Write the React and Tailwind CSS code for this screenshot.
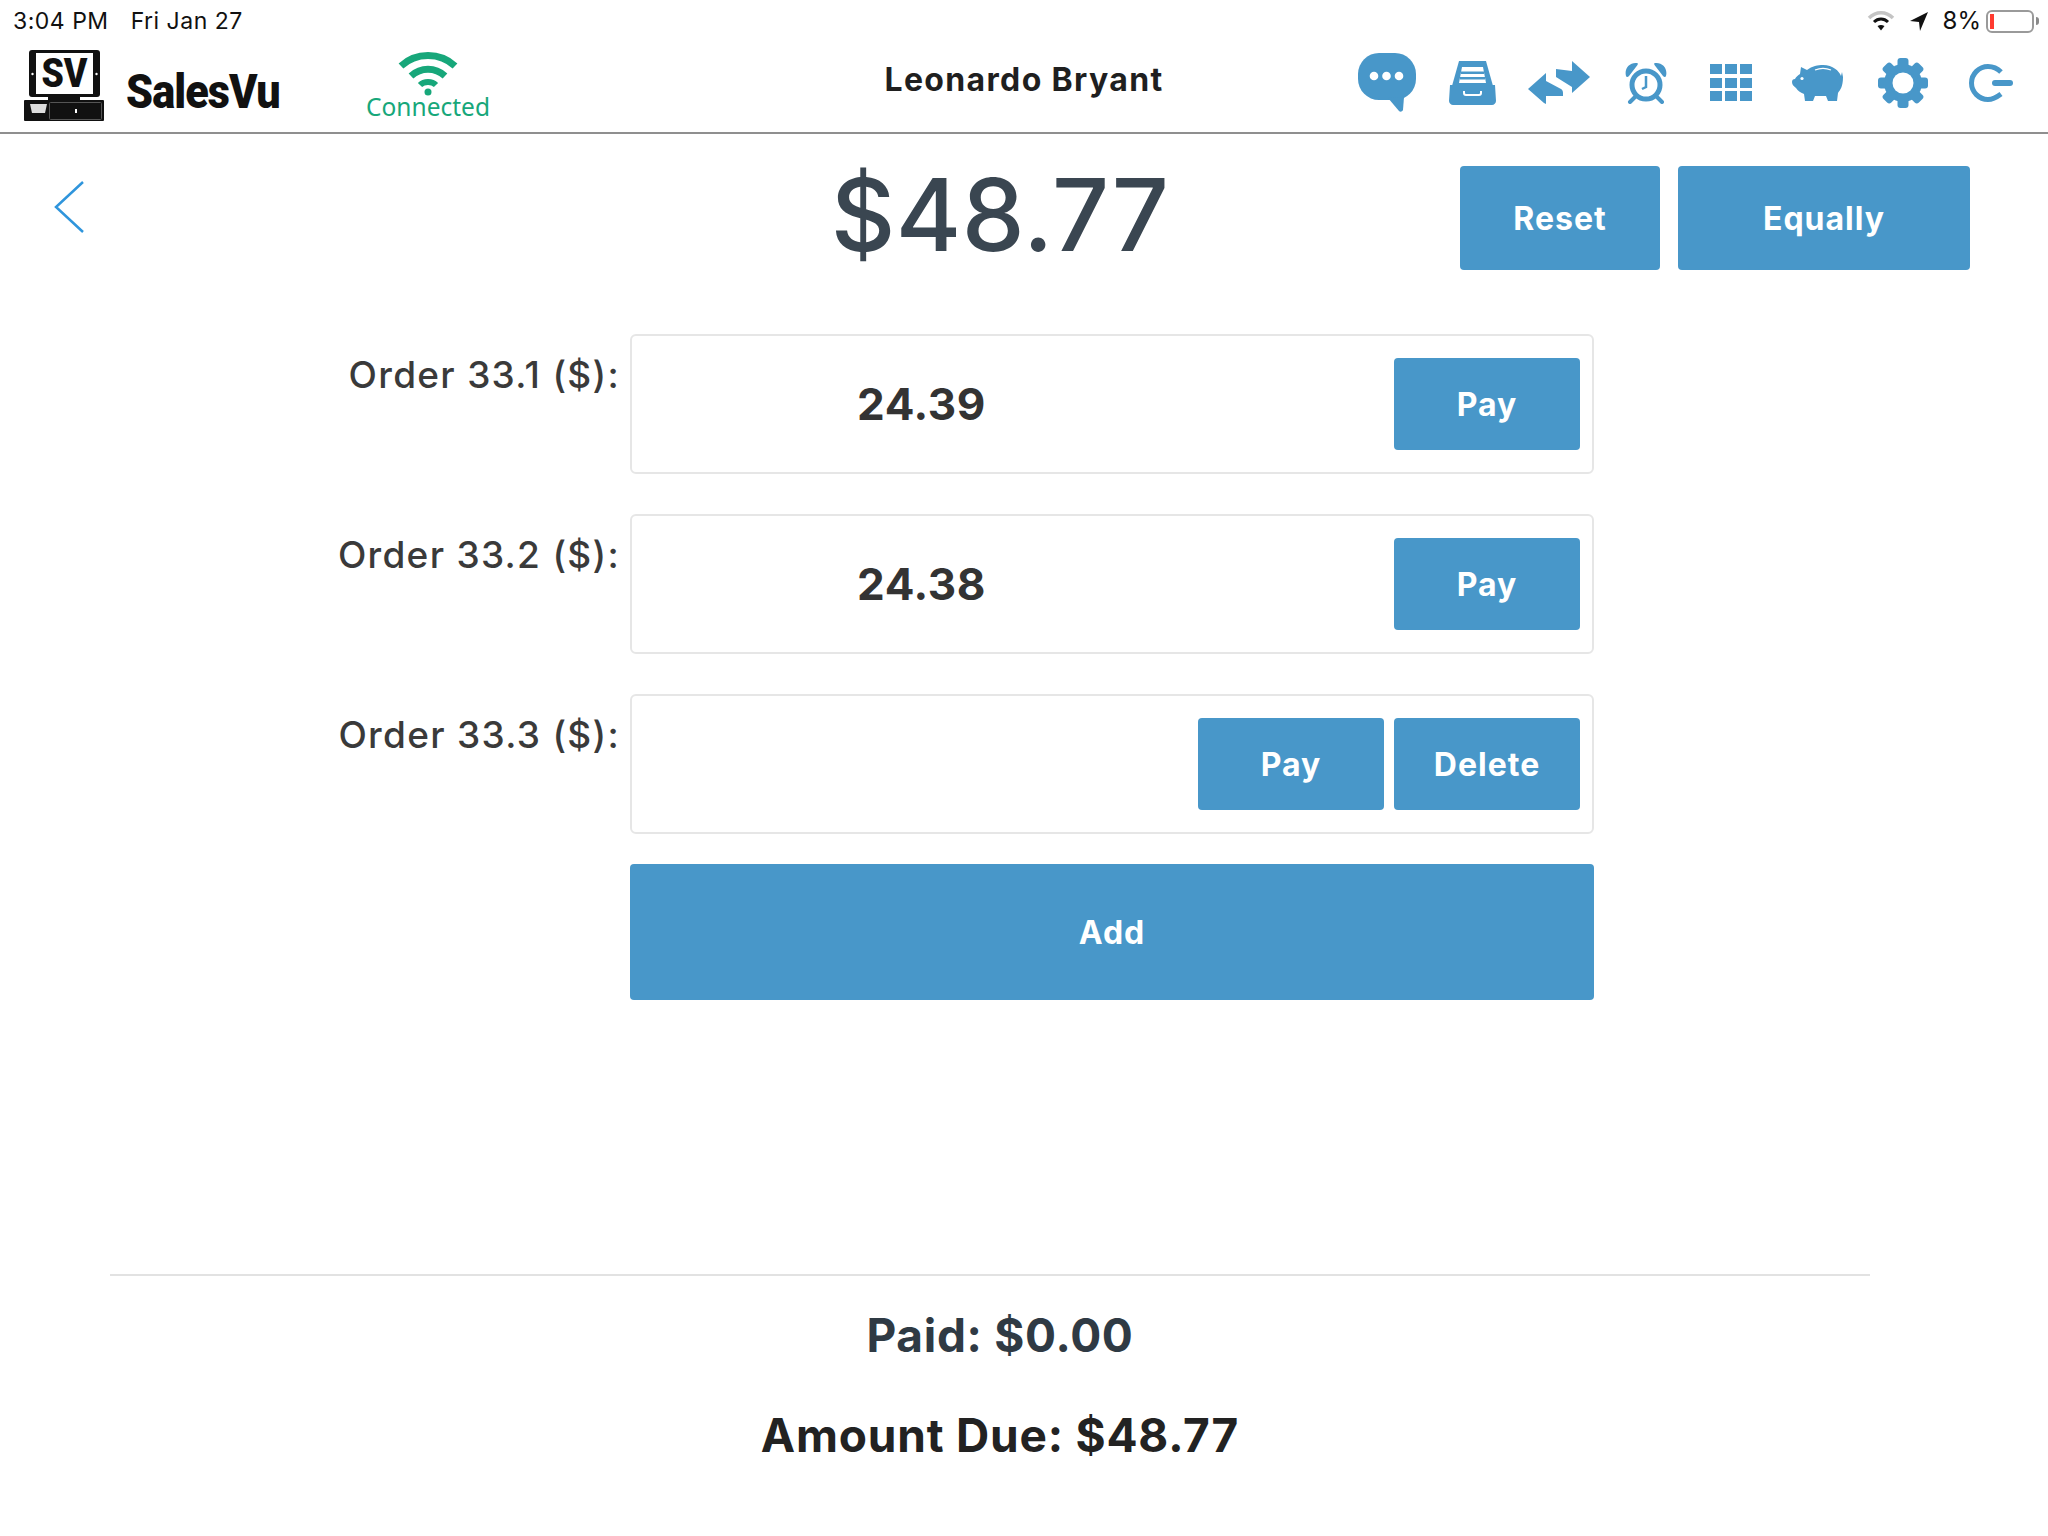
const rows = [
  { label: "Order 33.1 ($):", value: "24.39" },
  { label: "Order 33.2 ($):", value: "24.38" },
  { label: "Order 33.3 ($):", value: "", del: true },
];

const blue = "#4897c9";

function Logo() {
  return (
    <svg width="80" height="72" viewBox="0 0 80 72" className="shrink-0">
      <rect x="5" y="0" width="71" height="47" rx="3" fill="#111" />
      <rect x="12" y="3" width="57" height="41" fill="#fff" />
      <circle cx="8.5" cy="24" r="1.2" fill="#fff" />
      <circle cx="72.5" cy="24" r="1.2" fill="#fff" />
      <text x="40.5" y="37" textAnchor="middle" fontFamily="Roboto" fontWeight="900" fontSize="40" textLength="46" lengthAdjust="spacingAndGlyphs" fill="#111">SV</text>
      <rect x="24" y="47" width="32" height="3" fill="#111" />
      <rect x="0" y="50" width="80" height="21" rx="1" fill="#111" />
      <path d="M6 54H23L21 63H8Z" fill="#ddd" />
      <rect x="25.500" y="52.500" width="52" height="17" rx="1" fill="none" stroke="#555" strokeWidth="1" />
      <rect x="51" y="59" width="2" height="4" fill="#fff" />
    </svg>
  );
}

function WifiBig() {
  return (
    <svg width="60" height="45" viewBox="0 0 60 45" fill="none" stroke="#17a77a">
      <path d="M3 15C18 1 42 1 57 15" strokeWidth="7" />
      <path d="M13 25C23 16 37 16 47 25" strokeWidth="7" />
      <path d="M22 34C26 30 34 30 38 34" strokeWidth="6" />
      <circle cx="30" cy="41" r="3.500" fill="#17a77a" stroke="none" />
    </svg>
  );
}

function NavIcons() {
  return (
    <div className="flex items-center">
      <svg width="58" height="59" viewBox="0 0 58 59" className="mr-[33px]">
        <rect x="0" y="0" width="58" height="47" rx="21" fill={blue} />
        <path d="M30 45L46 44L45 57C44 59 42 59 41 58Z" fill={blue} />
        <circle cx="16" cy="23" r="4.300" fill="#fff" />
        <circle cx="28.500" cy="23" r="4.300" fill="#fff" />
        <circle cx="41" cy="23" r="4.300" fill="#fff" />
      </svg>
      <svg width="47" height="44" viewBox="0 0 47 44" className="mr-[32px]">
        <path d="M10 0H37L44 25H3Z" fill={blue} />
        <path d="M13 6H34L37 22H10Z" fill="#fff" />
        <rect x="12" y="10.500" width="23" height="2.500" fill={blue} />
        <rect x="11" y="16" width="25" height="2.500" fill={blue} />
        <path d="M1 24H46L47 40C47 42 45 44 43 44H4C2 44 0 42 0 40Z" fill={blue} />
        <path d="M15 30V32C15 33.500 16 34 17 34H30C31 34 32 33.500 32 32V30" fill="none" stroke="#fff" strokeWidth="2" />
      </svg>
      <svg width="62" height="43" viewBox="0 0 62 43" className="mr-[35px]">
        <path d="M0 28L18 12V20L33 28C34.500 29 35 30 35 32V35H18V43L16 42Z" fill={blue} />
        <path d="M62 16L44 0V10L28 8V16L44 26V32Z" fill={blue} />
      </svg>
      <svg width="42" height="42" viewBox="0 0 42 42" className="mr-[43px]" fill="none" stroke={blue}>
        <circle cx="21" cy="23" r="14" strokeWidth="5" />
        <path d="M21 14V25L17 27" strokeWidth="2.500" />
        <path d="M1 14C-1 6 5 0 12 1C13 1 13 2 12.500 3L4 14C3 15 1.500 15.500 1 14Z" fill={blue} stroke="none" />
        <path d="M41 14C43 6 37 0 30 1C29 1 29 2 29.500 3L38 14C39 15 40.500 15.500 41 14Z" fill={blue} stroke="none" />
        <path d="M10 35L5 40M32 35L37 40" strokeWidth="4" strokeLinecap="round" />
      </svg>
      <div className="mr-[40px] grid grid-cols-[12.300px_12.300px_12.300px] grid-rows-[10px_10px_10px] gap-x-[2.500px] gap-y-[3.500px]">
        {Array.from({ length: 9 }).map((_, i) => (
          <div key={i} className="bg-[#4897c9]" />
        ))}
      </div>
      <svg width="51" height="36" viewBox="0 0 51 36" className="mr-[35px]">
        <path d="M9 2L15 5C20 1 26 0 31 0C41 0 47 6 49 11L50 7L51 12C51 22 48 25 46 28L45 36H36L34 31H23L21 36H13L12 29C8 27 6 26 4 23C2 21 0 20 0 17C0 15 1 14 3 14C4 12 6 10 8 9Z" fill={blue} />
        <path d="M23 5C28 3 34 3 39 5" fill="none" stroke="#fff" strokeWidth="1.300" />
        <circle cx="10" cy="13.500" r="1.600" fill="#fff" />
      </svg>
      <svg width="50" height="50" viewBox="0 0 50 50" className="mr-[41px]">
        <g fill={blue}>
          <circle cx="25" cy="25" r="19" />
          {[0, 45, 90, 135, 180, 225, 270, 315].map((a) => (
            <rect key={a} x="19.500" y="0" width="11" height="12" rx="3" transform={`rotate(${a} 25 25)`} />
          ))}
        </g>
        <circle cx="25" cy="25" r="10.500" fill="#fff" />
      </svg>
      <svg width="44" height="38" viewBox="0 0 44 38" fill="none" stroke={blue} strokeWidth="5">
        <path d="M32 8C28 4 24 2.500 19 2.500C10 2.500 2.500 10 2.500 19C2.500 28 10 35.500 19 35.500C24 35.500 28 33 32 30" />
        <path d="M26 19H41" strokeWidth="6" strokeLinecap="round" />
      </svg>
    </div>
  );
}

function BlueButton({ children, className }) {
  return (
    <button className={`flex items-center justify-center rounded-[4px] bg-[#4897c9] pt-[2px] font-bold tracking-[1px] text-white ${className}`}>
      {children}
    </button>
  );
}

export default function App() {
  return (
    <div className="min-h-[1536px] bg-white font-['Inter',sans-serif]">
      <header className="h-[134px] border-b-2 border-[#8f8f8f]">
        <div className="flex h-[42px] items-center justify-between pl-[13px] pr-[9px] text-[23px] text-[#111]">
          <div className="flex gap-[22px] tracking-[0.5px]">
            <span>3:04 PM</span>
            <span>Fri Jan 27</span>
          </div>
          <div className="flex items-center">
            <svg width="28" height="20" viewBox="0 0 28 20" className="mr-[15px]" fill="none">
              <path d="M2 7C9 0 19 0 26 7" stroke="#c4c4c4" strokeWidth="3.500" />
              <path d="M7 11C11 7 17 7 21 11" stroke="#111" strokeWidth="3" />
              <path d="M10.500 15L14 19.500L17.500 15C15 13.500 13 13.500 10.500 15Z" fill="#111" />
            </svg>
            <svg width="18" height="19" viewBox="0 0 18 19" className="mr-[15px]">
              <path d="M18 0L0 9L9 10L10 19Z" fill="#111" />
            </svg>
            <span className="mr-[5px] text-[24px]">8%</span>
            <div className="flex h-[23px] w-[48px] items-center rounded-[6px] border-2 border-[#9a9a9a] pl-[2px]">
              <div className="h-[15px] w-[4px] bg-[#ff3b30]" />
            </div>
            <div className="ml-[2px] h-[8px] w-[3px] rounded-r-full bg-[#8a8a8a]" />
          </div>
        </div>
        <div className="grid h-[90px] grid-cols-[1fr_auto_1fr] items-center">
          <div className="flex items-center pb-[2px] pl-[24px]">
            <Logo />
            <span className="ml-[22px] mt-[12px] w-[160px] origin-left scale-x-[0.9] font-['Roboto',sans-serif] text-[48px] font-black leading-none tracking-[-1px] text-[#111]">
              SalesVu
            </span>
            <div className="ml-[80px] flex w-[124px] flex-col items-center pb-[4px]">
              <WifiBig />
              <span className="font-['Noto_Sans',sans-serif] text-[24.5px] leading-[22px] text-[#17a77a]">Connected</span>
            </div>
          </div>
          <div className="pb-[14px] text-[32px] font-bold tracking-[1.35px] text-[#1f1f1f]">Leonardo Bryant</div>
          <div className="flex justify-end pb-[9px] pr-[35px]">
            <NavIcons />
          </div>
        </div>
      </header>

      <div className="flex items-start pt-[32px]">
        <svg width="32" height="54" viewBox="0 0 32 54" fill="none" stroke="#2f95dc" strokeWidth="2.500" className="ml-[53px] mt-[14px]">
          <path d="M30 2L3 27L30 52" />
        </svg>
        <div className="ml-[715px] w-[400px] text-center text-[100px] font-medium leading-[97px] tracking-[0.5px] text-[#3a4651]">$48.77</div>
        <BlueButton className="ml-[260px] h-[104px] w-[200px] text-[32px]">Reset</BlueButton>
        <BlueButton className="ml-[18px] h-[104px] w-[292px] text-[32px]">Equally</BlueButton>
      </div>

      <div className="mt-[64px] flex flex-col gap-[40px]">
        {rows.map((r) => (
          <div key={r.label} className="flex items-start">
            <div className="w-[620px] pt-[19px] text-right text-[37px] font-medium leading-[44px] tracking-[1.3px] text-[#3a3a3a]">{r.label}</div>
            <div className="ml-[10px] flex h-[140px] w-[964px] items-center rounded-[6px] border-2 border-[#e6e6e6] pr-[12px]">
              <div className="ml-[225px] flex-1 text-[44px] font-bold tracking-[0.6px] text-[#333]">{r.value}</div>
              {r.del ? (
                <div className="flex gap-[10px]">
                  <BlueButton className="h-[92px] w-[186px] text-[32px]">Pay</BlueButton>
                  <BlueButton className="h-[92px] w-[186px] text-[32px]">Delete</BlueButton>
                </div>
              ) : (
                <BlueButton className="h-[92px] w-[186px] text-[32px]">Pay</BlueButton>
              )}
            </div>
          </div>
        ))}
        <BlueButton className="-mt-[10px] ml-[630px] h-[136px] w-[964px] text-[32px]">Add</BlueButton>
      </div>

      <div className="ml-[110px] mt-[274px] w-[1760px] border-t-2 border-[#e2e2e2]" />
      <div className="w-[2000px] pt-[29px] text-center font-bold">
        <div className="text-[46px] leading-[60px] tracking-[0.7px] text-[#2f3a44]">Paid: $0.00</div>
        <div className="mt-[40px] text-[46px] leading-[60px] tracking-[0.8px] text-[#222]">Amount Due: $48.77</div>
      </div>
    </div>
  );
}
